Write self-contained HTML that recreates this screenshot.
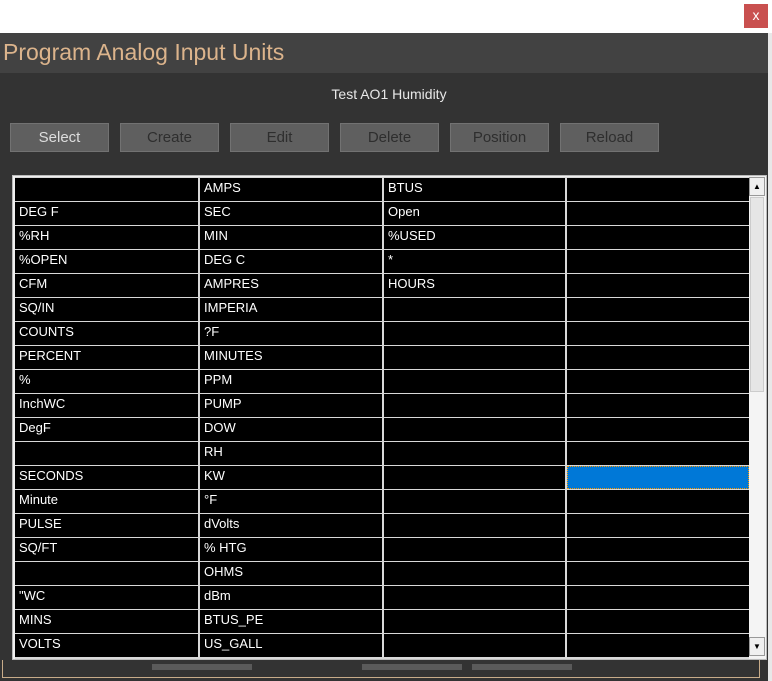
<!DOCTYPE html><html><head><style>
body{margin:0;width:772px;height:681px;background:#fff;position:relative;overflow:hidden;font-family:"Liberation Sans",Arial,sans-serif}
.abs{position:absolute}
.btn{position:absolute;top:123px;width:97px;height:27px;background:#5f5f5f;border:1px solid #727272;color:#2e2e2e;font-size:15px;line-height:27px;text-align:center}
.grid{position:absolute;left:15px;top:177px;width:734px;height:481px;background:#d8d8d8;display:grid;grid-template-columns:183px 182px 181px 182px;column-gap:2px;row-gap:1px;grid-template-rows:repeat(20,23px);padding-top:1px}
.grid div{background:#000;color:#fff;font-size:13px;line-height:19px;padding-left:4px}
</style></head><body>
<div class="abs" style="left:744px;top:4px;width:24px;height:24px;background:#c9504f;color:#fff;font-size:14px;text-align:center;line-height:22px">x</div>
<div class="abs" style="left:0;top:33px;width:768px;height:40px;background:#424242;color:#dcb48c;font-size:23px;line-height:38px;padding-left:3px;box-sizing:border-box">Program Analog Input Units</div>
<div class="abs" style="left:0;top:73px;width:768px;height:608px;background:#333"></div>
<div class="abs" style="left:768px;top:33px;width:4px;height:648px;background:#e8e8e8"></div>
<div class="abs" style="left:0;top:86px;width:778px;text-align:center;color:#e8e8e8;font-size:14px">Test AO1 Humidity</div>
<div class="btn" style="left:10px;color:#ddd">Select</div>
<div class="btn" style="left:120px">Create</div>
<div class="btn" style="left:230px">Edit</div>
<div class="btn" style="left:340px">Delete</div>
<div class="btn" style="left:450px">Position</div>
<div class="btn" style="left:560px">Reload</div>
<div class="abs" style="left:12px;top:175px;width:755px;height:485px;background:#f0f0f0;border:1px solid #bbb;box-sizing:border-box"></div>
<div class="grid">
<div></div><div>AMPS</div><div>BTUS</div><div></div>
<div>DEG F</div><div>SEC</div><div>Open</div><div></div>
<div>%RH</div><div>MIN</div><div>%USED</div><div></div>
<div>%OPEN</div><div>DEG C</div><div>*</div><div></div>
<div>CFM</div><div>AMPRES</div><div>HOURS</div><div></div>
<div>SQ/IN</div><div>IMPERIA</div><div></div><div></div>
<div>COUNTS</div><div>?F</div><div></div><div></div>
<div>PERCENT</div><div>MINUTES</div><div></div><div></div>
<div>%</div><div>PPM</div><div></div><div></div>
<div>InchWC</div><div>PUMP</div><div></div><div></div>
<div>DegF</div><div>DOW</div><div></div><div></div>
<div></div><div>RH</div><div></div><div></div>
<div>SECONDS</div><div>KW</div><div></div><div style="background:#0078d7;outline:1px dotted #f90;outline-offset:-1px"></div>
<div>Minute</div><div>°F</div><div></div><div></div>
<div>PULSE</div><div>dVolts</div><div></div><div></div>
<div>SQ/FT</div><div>% HTG</div><div></div><div></div>
<div></div><div>OHMS</div><div></div><div></div>
<div>"WC</div><div>dBm</div><div></div><div></div>
<div>MINS</div><div>BTUS_PE</div><div></div><div></div>
<div>VOLTS</div><div>US_GALL</div><div></div><div></div>
</div>
<div class="abs" style="left:749px;top:177px;width:17px;height:481px;background:#f4f4f4"></div>
<div class="abs" style="left:749px;top:177px;width:16px;height:19px;background:#f0f0f0;border:1px solid #999;box-sizing:border-box;font-size:8px;text-align:center;line-height:17px">▲</div>
<div class="abs" style="left:750px;top:197px;width:14px;height:195px;background:#e6e6e6;border:1px solid #ccc;box-sizing:border-box"></div>
<div class="abs" style="left:749px;top:637px;width:16px;height:19px;background:#f0f0f0;border:1px solid #999;box-sizing:border-box;font-size:8px;text-align:center;line-height:17px">▼</div>
<div class="abs" style="left:2px;top:660px;width:758px;height:18px;border:1px solid #c8ac8a;border-top:none;box-sizing:border-box"></div>
<div class="abs" style="left:152px;top:664px;width:100px;height:6px;background:#5a5a5a"></div>
<div class="abs" style="left:362px;top:664px;width:100px;height:6px;background:#5a5a5a"></div>
<div class="abs" style="left:472px;top:664px;width:100px;height:6px;background:#5a5a5a"></div>
</body></html>
